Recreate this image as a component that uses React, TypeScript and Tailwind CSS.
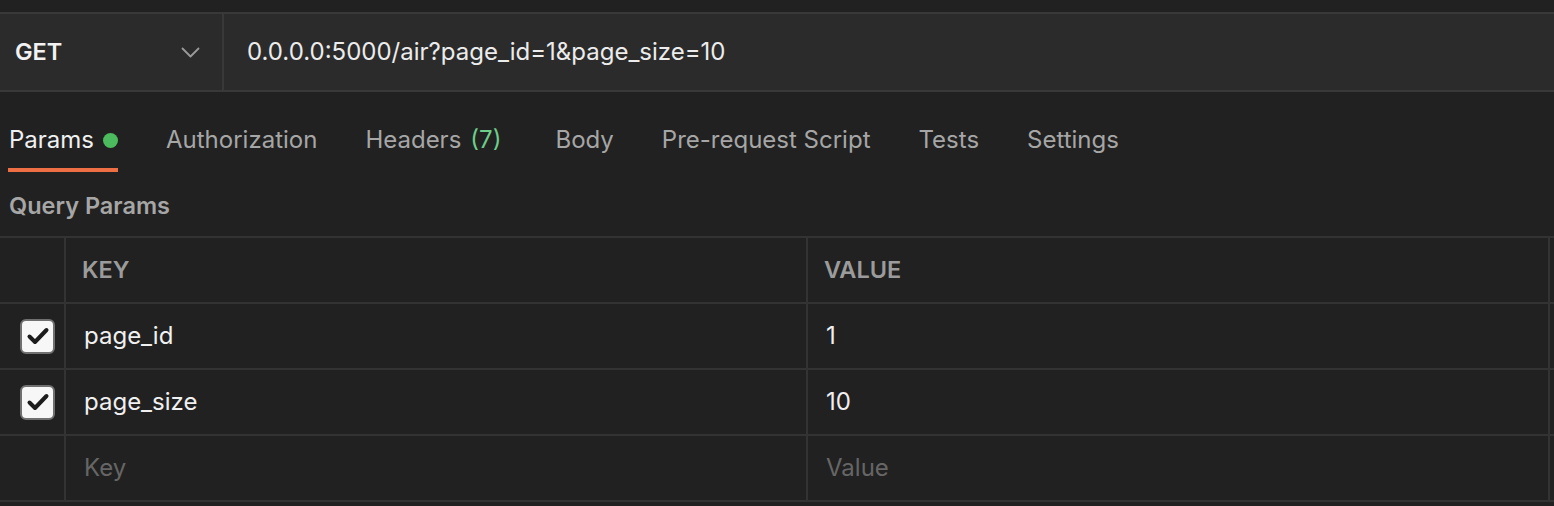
const font = { fontFamily: "Inter, 'Noto Sans', sans-serif" };

type Row = { key: string; value: string; on: boolean };

const rows: Row[] = [
  { key: "page_id", value: "1", on: true },
  { key: "page_size", value: "10", on: true },
];

function Check() {
  return (
    <div className="flex h-[35px] w-[35px] items-center justify-center rounded-[6px] border-2 border-[#707070] bg-[#f7f7f7]">
      <svg width="24" height="20" viewBox="0 0 24 20" fill="none">
        <path d="M3.5 10.5l5.5 5.5L20.5 4" stroke="#1c1c1c" strokeWidth="4" strokeLinecap="round" strokeLinejoin="round" />
      </svg>
    </div>
  );
}

function Tab({ label, active, extra, className = "" }: { label: string; active?: boolean; extra?: React.ReactNode; className?: string }) {
  return (
    <div className={`relative flex h-full items-center pt-[16px] ${className}`}>
      <span className={active ? "text-[#f0f0f0]" : "text-[#a6a6a6]"}>{label}</span>
      {extra}
      {active && <div className="absolute bottom-0 left-[-1px] right-0 h-[4px] bg-[#ef6f45]" />}
    </div>
  );
}

export default function App() {
  return (
    <div className="h-[506px] w-[1554px] overflow-hidden bg-[#212121]" style={font}>
      <div className="h-[12px]" />
      <div className="flex h-[80px] border-y-2 border-[#393939] bg-[#2b2b2b]">
        <div className="flex w-[224px] items-center justify-between border-r-2 border-[#393939] pl-[15px] pr-[22px]">
          <span className="text-[23.5px] font-semibold text-[#f2f2f2]">GET</span>
          <svg width="19" height="11" viewBox="0 0 19 11" fill="none" className="mt-[1px]">
            <path d="M1.5 1.5l8 8 8-8" stroke="#9a9a9a" strokeWidth="1.8" strokeLinecap="round" strokeLinejoin="round" />
          </svg>
        </div>
        <div className="flex flex-1 items-center pl-[23px] text-[24px] text-[#ececec]">
          0.0.0.0:5000/air?page_id=1&amp;page_size=10
        </div>
      </div>

      <div className="flex h-[80px] gap-[48px] pl-[9px] text-[24px]">
        <Tab label="Params" active extra={<span className="ml-[9px] h-[15px] w-[15px] rounded-full bg-[#4cbb5d]" />} />
        <Tab label="Authorization" />
        <Tab
          label="Headers"
          className="mr-[6px]"
          extra={<span className="ml-[9px] text-[#6cce8a]">(7)</span>}
        />
        <Tab label="Body" />
        <Tab label="Pre-request Script" />
        <Tab label="Tests" />
        <Tab label="Settings" />
      </div>

      <div className="flex h-[64px] items-center pl-[9px] pt-[4px] text-[23.5px] font-semibold text-[#a6a6a6]">
        Query Params
      </div>

      <div className="border-t-2 border-[#333333]">
        <div className="grid h-[66px] grid-cols-[66px_742px_742px_1fr] border-b-2 border-[#333333] text-[23.5px] font-semibold text-[#9b9b9b]">
          <div className="border-r-2 border-[#333333]" />
          <div className="flex items-center border-r-2 border-[#333333] pl-[16px]">KEY</div>
          <div className="flex items-center border-r-2 border-[#333333] pl-[16px]">VALUE</div>
          <div />
        </div>
        {rows.map((r) => (
          <div key={r.key} className="grid h-[66px] grid-cols-[66px_742px_742px_1fr] border-b-2 border-[#333333] text-[24px] text-[#f0f0f0]">
            <div className="flex items-center border-r-2 border-[#333333] pl-[20px]">
              {r.on && <Check />}
            </div>
            <div className="flex items-center border-r-2 border-[#333333] pl-[18px]">{r.key}</div>
            <div className="flex items-center border-r-2 border-[#333333] pl-[18px]">{r.value}</div>
            <div />
          </div>
        ))}
        <div className="grid h-[66px] grid-cols-[66px_742px_742px_1fr] border-b-2 border-[#333333] text-[24px] text-[#666666]">
          <div className="border-r-2 border-[#333333]" />
          <div className="flex items-center border-r-2 border-[#333333] pl-[18px]">Key</div>
          <div className="flex items-center border-r-2 border-[#333333] pl-[18px]">Value</div>
          <div />
        </div>
      </div>
    </div>
  );
}
